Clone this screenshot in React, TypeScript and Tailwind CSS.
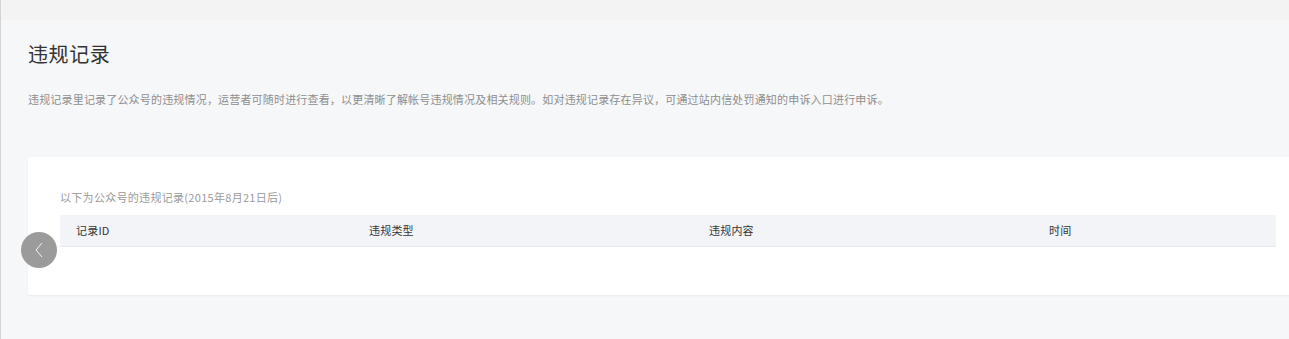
const columns = [
  { label: "记录ID", width: "w-[293px]" },
  { label: "违规类型", width: "w-[340px]" },
  { label: "违规内容", width: "w-[340px]" },
  { label: "时间", width: "flex-1" },
];

export default function App() {
  return (
    <div
      className="relative min-h-[339px] w-full overflow-hidden border-l border-[#d4d4d4] bg-[#f6f7f9]"
      style={{ fontFamily: '"Noto Sans CJK SC", "Liberation Sans", sans-serif' }}
    >
      {/* top strip */}
      <div className="h-[20px] bg-[#f3f3f3]"></div>

      <div className="pl-[27px]">
        <h1 className="mt-[20px] text-[20px] leading-[28px] font-normal tracking-[0.6px] text-[#333]">违规记录</h1>
        <p className="mt-[23px] text-[11px] leading-[16px] tracking-[0.18px] text-[#8e8e8e]">
          违规记录里记录了公众号的违规情况，运营者可随时进行查看，以更清晰了解帐号违规情况及相关规则。如对违规记录存在异议，可通过站内信处罚通知的申诉入口进行申诉。
        </p>

        <div className="mt-[50px] w-[1280px] rounded-[2px] bg-white px-[32px] pt-[32px] pb-[48px] shadow-[0_1px_2px_rgba(0,0,0,0.06)]">
          <div className="text-[11px] leading-[16px] tracking-[0.3px] text-[#9a9a9a]">以下为公众号的违规记录(2015年8月21日后)</div>
          <div className="mt-[10px] flex h-[32px] items-center border-b border-[#e7e8ec] bg-[#f3f4f7]">
            {columns.map((col) => (
              <div key={col.label} className={`${col.width} pl-4 text-[11px] tracking-[0.2px] text-[#353535]`}>
                {col.label}
              </div>
            ))}
          </div>
        </div>
      </div>

      {/* back button floating on the left */}
      <button className="absolute top-[232px] left-[20px] flex h-[36px] w-[36px] items-center justify-center rounded-full bg-[#9b9b9b]">
        <svg width="10" height="16" viewBox="0 0 10 16" fill="none">
          <polyline points="8,1 2,8 8,15" stroke="#f4f4f4" strokeWidth="1" />
        </svg>
      </button>
    </div>
  );
}
